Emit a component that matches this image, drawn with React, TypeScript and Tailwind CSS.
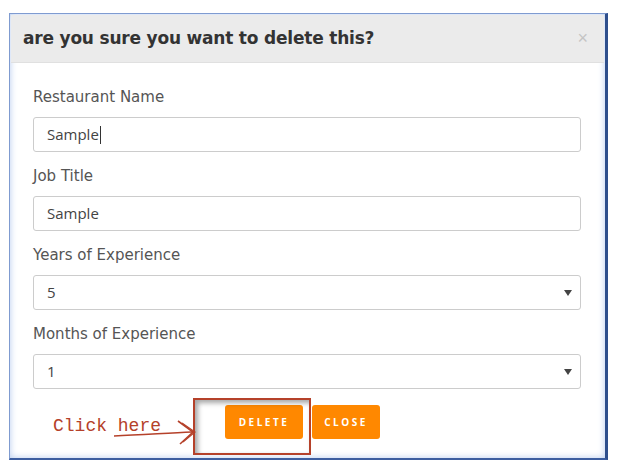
import React from 'react';

const Field = ({ label, value, select, caret }: { label: string; value: string; select?: boolean; caret?: boolean }) => (
  <div className="flex flex-col">
    <label className="text-[15px] leading-[20px] text-[#555] font-['DejaVu_Sans',sans-serif] tracking-[0px] mb-[10px]">
      {label}
    </label>
    <div className="h-[35px] w-[548px] border border-[#cccccc] rounded-[3px] bg-white flex items-center justify-between pl-[13px] pr-[8px]">
      <span className="text-[15px] text-[#444] font-['Open_Sans',sans-serif] flex items-center">
        {value}
        {caret && <span className="inline-block w-px h-[18px] bg-[#333] ml-px" />}
      </span>
      {select && (
        <svg width="8" height="6" viewBox="0 0 8 6">
          <path d="M0 0 L8 0 L4 6 Z" fill="#444" />
        </svg>
      )}
    </div>
  </div>
);

const App = () => {
  return (
    <div className="w-[618px] h-[469px] bg-white relative pt-[13px] pl-[9px] overflow-hidden">
      <div className="w-[599px] h-[447px] border border-[#7f9bd0] border-r-[3px] border-r-[#2f4f8c] border-b-2 border-b-[#3d5ea0] shadow-[inset_0_0_7px_#b6cbee] flex flex-col">
        <div className="h-[48px] bg-[#ebebeb] border-b border-[#e0e0e0] flex items-center justify-between pl-[12px] pr-[16px] mx-[1px] mt-[1px]">
          <h2 className="text-[17px] font-bold text-[#333] font-['DejaVu_Sans',sans-serif] tracking-[-0.2px]">
            are you sure you want to delete this?
          </h2>
          <span className="text-[#c4c4c4] text-[18px] font-['Liberation_Sans',sans-serif]">×</span>
        </div>

        <div className="flex flex-col pl-[23px] pt-[24px] gap-[14px]">
          <Field label="Restaurant Name" value="Sample" caret />
          <Field label="Job Title" value="Sample" />
          <Field label="Years of Experience" value="5" select />
          <Field label="Months of Experience" value="1" select />
        </div>

        <div className="flex gap-[9px] pl-[215px] pt-[16px]">
          <button className="h-[34px] w-[78px] bg-[#ff8800] rounded-[3px] text-white text-[10px] font-bold tracking-[2.5px] font-['Open_Sans',sans-serif]">
            DELETE
          </button>
          <button className="h-[34px] w-[68px] bg-[#ff8800] rounded-[3px] text-white text-[10px] font-bold tracking-[2.5px] font-['Open_Sans',sans-serif]">
            CLOSE
          </button>
        </div>
      </div>

      {/* annotation */}
      <div className="absolute left-[193px] top-[398px] w-[118px] h-[57px] border-2 border-[#b5412a] shadow-[inset_3px_3px_5px_rgba(0,0,0,0.35)]" />
      <span className="absolute left-[53px] top-[415px] text-[18px] text-[#b5412a] font-['Liberation_Mono',monospace] leading-[22px]">
        Click here
      </span>
      <svg className="absolute left-[112px] top-[418px]" width="86" height="28" viewBox="0 0 86 28">
        <path d="M2 18 C30 17 55 15 80 14" stroke="#b5412a" strokeWidth="1.6" fill="none" />
        <path d="M66 3 L81 14 L68 26" stroke="#b5412a" strokeWidth="1.6" fill="none" />
        <path d="M70 5 L83 14 L71 24" stroke="#b5412a" strokeWidth="1.2" fill="none" />
      </svg>
    </div>
  );
};

export default App;
